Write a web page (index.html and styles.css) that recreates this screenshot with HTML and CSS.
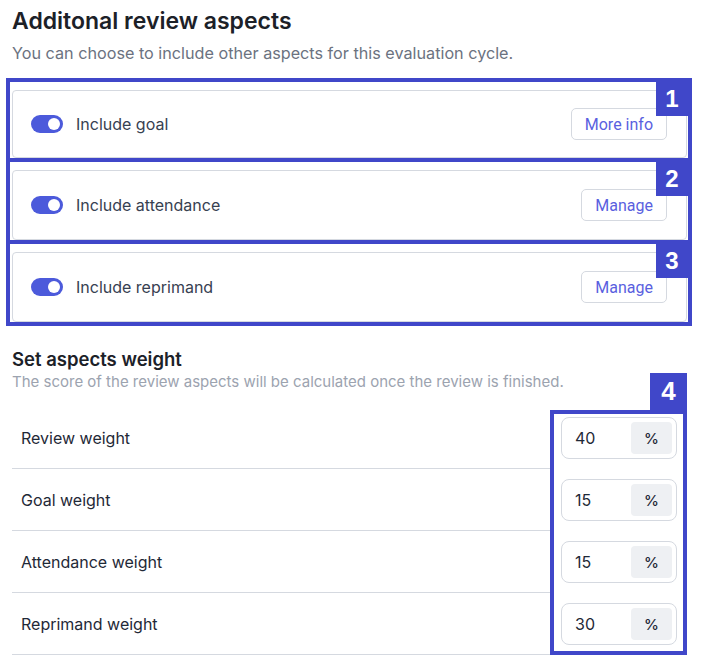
FILE: index.html
```html
<!DOCTYPE html>
<html>
<head>
<meta charset="utf-8">
<link rel="stylesheet" href="styles.css">
</head>
<body>
<div class="page">
  <h1 class="title">Additonal review aspects</h1>
  <p class="subtitle">You can choose to include other aspects for this evaluation cycle.</p>

  <div class="mark-box">
    <div class="seg seg-first">
      <div class="card">
        <span class="toggle"><span class="knob"></span></span>
        <span class="card-label">Include goal</span>
        <button class="btn">More info</button>
      </div>
      <span class="badge">1</span>
    </div>
    <div class="seg">
      <div class="card">
        <span class="toggle"><span class="knob"></span></span>
        <span class="card-label">Include attendance</span>
        <button class="btn">Manage</button>
      </div>
      <span class="badge">2</span>
    </div>
    <div class="seg">
      <div class="card">
        <span class="toggle"><span class="knob"></span></span>
        <span class="card-label">Include reprimand</span>
        <button class="btn">Manage</button>
      </div>
      <span class="badge">3</span>
    </div>
  </div>

  <h2 class="section-title">Set aspects weight</h2>
  <p class="section-sub">The score of the review aspects will be calculated once the review is finished.</p>

  <div class="weights">
    <div class="labels">
      <div class="row">Review weight</div>
      <div class="row">Goal weight</div>
      <div class="row">Attendance weight</div>
      <div class="row">Reprimand weight</div>
    </div>
    <div class="inputs-box">
      <span class="badge badge4">4</span>
      <div class="field"><span class="value">40</span><span class="unit">%</span></div>
      <div class="field"><span class="value">15</span><span class="unit">%</span></div>
      <div class="field"><span class="value">15</span><span class="unit">%</span></div>
      <div class="field"><span class="value">30</span><span class="unit">%</span></div>
    </div>
  </div>
</div>
</body>
</html>
```

FILE: styles.css
```css
* { box-sizing: border-box; }
html, body { margin: 0; padding: 0; background: #fff; }
body { font-family: Inter, "Noto Sans", sans-serif; color: #1f2937; }

.page { padding: 0 0 0 12px; width: 702px; }

.title {
  margin: 0;
  padding-top: 7px;
  font-size: 23px;
  line-height: 28px;
  font-weight: 600;
  color: #1c2128;
}
.subtitle {
  margin: 7px 0 0;
  font-size: 16.2px;
  line-height: 22px;
  color: #6b7280;
}

.mark-box {
  margin: 14px 0 0 -6px;
  width: 686px;
  border: 4px solid #4047c9;
}
.seg {
  position: relative;
  padding: 8px 1px 0 2px;
  border-top: 4px solid #4047c9;
}
.seg-first { border-top: 0; }
.card {
  height: 70px;
  border: 1px solid #d5d9e0;
  border-radius: 4px;
  display: flex;
  align-items: center;
  padding: 0 19px 0 18px;
}
.seg-first .card { height: 68px; }

.toggle {
  width: 32px;
  height: 18px;
  border-radius: 9px;
  background: #4c5adb;
  display: flex;
  align-items: center;
  justify-content: flex-end;
  padding-right: 3px;
  flex: none;
}
.knob {
  width: 12px;
  height: 12px;
  border-radius: 50%;
  background: #fff;
}
.card-label {
  margin-left: 13px;
  font-size: 16px;
  color: #374151;
  flex: 1;
}
.btn {
  font-family: Roboto, "Liberation Sans", sans-serif;
  font-size: 16px;
  color: #5a5fe0;
  background: #fff;
  border: 1px solid #d5d9e0;
  border-radius: 5px;
  height: 32px;
  padding: 0 13px;
}

.badge {
  position: absolute;
  top: 0;
  right: 0;
  width: 32px;
  height: 34px;
  background: #4047c9;
  color: #fff;
  font-family: "Liberation Sans", Arial, sans-serif;
  font-weight: 700;
  font-size: 24px;
  display: flex;
  align-items: center;
  justify-content: center;
}

.section-title {
  margin: 22px 0 0;
  font-size: 18.5px;
  line-height: 22px;
  font-weight: 600;
  color: #1c2128;
}
.section-sub {
  margin: 2px 0 0;
  font-size: 15px;
  line-height: 20px;
  color: #9ca3af;
}

.weights {
  margin-top: 15px;
  display: flex;
  align-items: flex-start;
}
.labels { width: 538px; }
.row {
  height: 62px;
  border-bottom: 1px solid #d5d9e0;
  display: flex;
  align-items: center;
  padding-left: 9px;
  font-size: 16px;
  color: #1f2937;
}

.inputs-box {
  position: relative;
  margin-top: 3px;
  width: 137px;
  border: 4px solid #4047c9;
  padding: 3px 6px 6px 7px;
  display: flex;
  flex-direction: column;
  gap: 20px;
}
.badge4 {
  top: -41px;
  right: -4px;
  width: 37px;
  height: 37px;
  font-size: 26px;
}
.field {
  height: 42px;
  border: 1px solid #d5d9e0;
  border-radius: 8px;
  display: flex;
  align-items: center;
  padding: 4px;
}
.value {
  flex: 1;
  padding-left: 9px;
  font-size: 16px;
  color: #1f2937;
}
.unit {
  width: 41px;
  height: 100%;
  background: #eef0f3;
  border-radius: 4px;
  display: flex;
  align-items: center;
  justify-content: center;
  font-size: 15px;
  font-weight: 500;
  color: #1f2937;
}
```
